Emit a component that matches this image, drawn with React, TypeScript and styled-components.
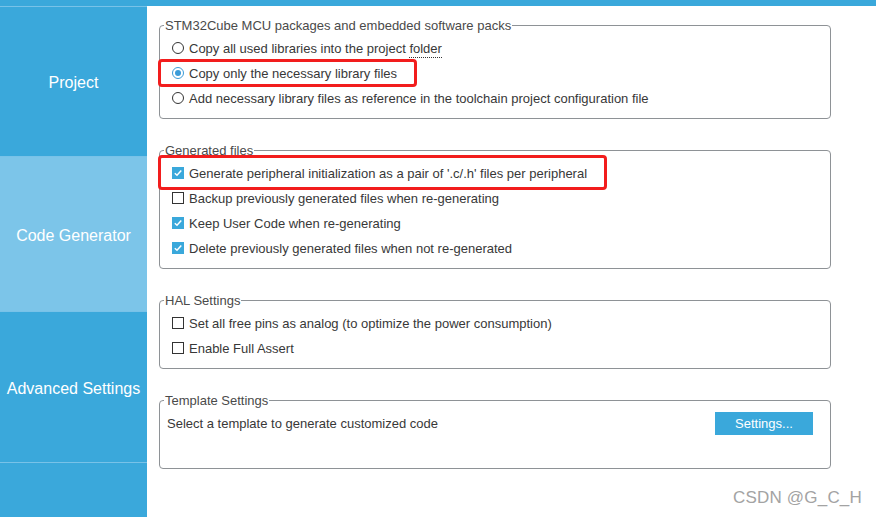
import React from "react";
import styled, { createGlobalStyle, css } from "styled-components";

const GlobalStyle = createGlobalStyle`
  html, body { margin: 0; padding: 0; background: #ffffff; }
  body { font-family: "Liberation Sans", Arial, sans-serif; }
  #root { width: 876px; height: 517px; overflow: hidden; }
`;

const BLUE = "#3aa8db";
const BLUE_LIGHT = "#7cc5e9";
const SEP = "#78c2e8";

const Page = styled.div`
  width: 876px;
  height: 517px;
  display: flex;
  flex-direction: column;
  background: #fff;
`;

const TopBar = styled.div`
  height: 6px;
  flex: none;
  background: ${BLUE};
`;

const Main = styled.div`
  flex: 1;
  display: flex;
  min-height: 0;
`;

const Sidebar = styled.nav`
  width: 147px;
  flex: none;
  display: flex;
  flex-direction: column;
  background: ${BLUE};
`;

const NavItem = styled.div<{ $h: number; $active?: boolean }>`
  height: ${(p) => p.$h}px;
  flex: none;
  box-sizing: border-box;
  border-top: 1px solid ${SEP};
  padding-top: 3px;
  display: flex;
  align-items: center;
  justify-content: center;
  color: #ffffff;
  font-size: 16px;
  white-space: nowrap;
  background: ${(p) => (p.$active ? BLUE_LIGHT : BLUE)};
`;

const NavFill = styled.div`
  flex: 1;
  border-top: 1px solid ${SEP};
`;

const Content = styled.div`
  flex: 1;
  display: flex;
  flex-direction: column;
  gap: 25px;
  padding: 12.5px 45px 0 12px;
  position: relative;
`;

const Group = styled.fieldset<{ $extraBottom?: number }>`
  margin: 0;
  min-width: 0;
  border: 1px solid #8e9296;
  border-radius: 4px;
  padding: 3px 0 ${(p) => 7 + (p.$extraBottom ?? 0)}px;
  display: flex;
  flex-direction: column;
`;

const Legend = styled.legend`
  font-size: 13px;
  line-height: 14px;
  height: 14px;
  color: #4a4a4a;
  padding: 0 1px;
  margin-left: 4px;
`;

const Option = styled.div`
  position: relative;
  height: 25px;
  display: flex;
  align-items: center;
  gap: 5px;
  padding-left: 12px;
  font-size: 13px;
  color: #383838;
  white-space: nowrap;
`;

const Radio = styled.span<{ $checked?: boolean }>`
  width: 12px;
  height: 12px;
  box-sizing: border-box;
  border-radius: 50%;
  border: 1px solid ${(p) => (p.$checked ? "#3a9bd8" : "#333333")};
  background: #fff;
  display: flex;
  align-items: center;
  justify-content: center;
  flex: none;
  &::after {
    content: "";
    width: 6px;
    height: 6px;
    border-radius: 50%;
    background: ${(p) => (p.$checked ? "#3a9bd8" : "transparent")};
  }
`;

const Box = styled.span<{ $checked?: boolean }>`
  width: 12px;
  height: 12px;
  box-sizing: border-box;
  flex: none;
  display: flex;
  align-items: center;
  justify-content: center;
  ${(p) =>
    p.$checked
      ? css`
          background: #3aa8db;
          border: 1px solid #3aa8db;
        `
      : css`
          background: #fff;
          border: 1px solid #333333;
        `}
`;

const Focus = styled.span`
  border-bottom: 1px dotted #333;
  padding-bottom: 1px;
`;

const Highlight = styled.span<{ $top: number; $w: number; $h: number }>`
  position: absolute;
  left: -2px;
  top: ${(p) => p.$top}px;
  width: ${(p) => p.$w}px;
  height: ${(p) => p.$h}px;
  box-sizing: border-box;
  border: 3px solid #f21d1d;
  border-radius: 4px;
  pointer-events: none;
`;

const TemplateRow = styled.div`
  height: 25px;
  display: flex;
  align-items: center;
  justify-content: space-between;
  padding: 0 17px 0 7px;
  font-size: 13px;
  color: #383838;
`;

const Button = styled.button`
  width: 98px;
  height: 23px;
  border: none;
  background: ${BLUE};
  color: #ffffff;
  font-family: "Liberation Sans", Arial, sans-serif;
  font-size: 13px;
  padding: 0;
  margin-top: 1px;
`;

const Watermark = styled.div`
  position: absolute;
  right: 14px;
  bottom: 9px;
  font-size: 17px;
  color: #a3a3a3;
  letter-spacing: 0.2px;
`;

const CheckMark = () => (
  <svg width="10" height="10" viewBox="0 0 10 10">
    <path d="M1.8 5.2 L4 7.3 L8.3 2.6" fill="none" stroke="#fff" strokeWidth="1.5" />
  </svg>
);

const Check = ({ checked }: { checked?: boolean }) => (
  <Box $checked={checked}>{checked ? <CheckMark /> : null}</Box>
);

export default function App() {
  return (
    <>
      <GlobalStyle />
      <Page>
        <TopBar />
        <Main>
          <Sidebar>
            <NavItem $h={150}>Project</NavItem>
            <NavItem $h={155} $active>
              Code Generator
            </NavItem>
            <NavItem $h={151}>Advanced Settings</NavItem>
            <NavFill />
          </Sidebar>
          <Content>
            <Group>
              <Legend>STM32Cube MCU packages and embedded software packs</Legend>
              <Option>
                <Radio />
                <span>
                  Copy all used libraries into the project <Focus>folder</Focus>
                </span>
              </Option>
              <Option>
                <Highlight $top={-1.5} $w={259} $h={28} />
                <Radio $checked />
                <span>Copy only the necessary library files</span>
              </Option>
              <Option>
                <Radio />
                <span>Add necessary library files as reference in the toolchain project configuration file</span>
              </Option>
            </Group>

            <Group>
              <Legend>Generated files</Legend>
              <Option>
                <Highlight $top={-5.5} $w={449} $h={35} />
                <Check checked />
                <span>Generate peripheral initialization as a pair of '.c/.h' files per peripheral</span>
              </Option>
              <Option>
                <Check />
                <span>Backup previously generated files when re-generating</span>
              </Option>
              <Option>
                <Check checked />
                <span>Keep User Code when re-generating</span>
              </Option>
              <Option>
                <Check checked />
                <span>Delete previously generated files when not re-generated</span>
              </Option>
            </Group>

            <Group>
              <Legend>HAL Settings</Legend>
              <Option>
                <Check />
                <span>Set all free pins as analog (to optimize the power consumption)</span>
              </Option>
              <Option>
                <Check />
                <span>Enable Full Assert</span>
              </Option>
            </Group>

            <Group $extraBottom={25}>
              <Legend>Template Settings</Legend>
              <TemplateRow>
                <span>Select a template to generate customized code</span>
                <Button>Settings...</Button>
              </TemplateRow>
            </Group>

            <Watermark>CSDN @G_C_H</Watermark>
          </Content>
        </Main>
      </Page>
    </>
  );
}
